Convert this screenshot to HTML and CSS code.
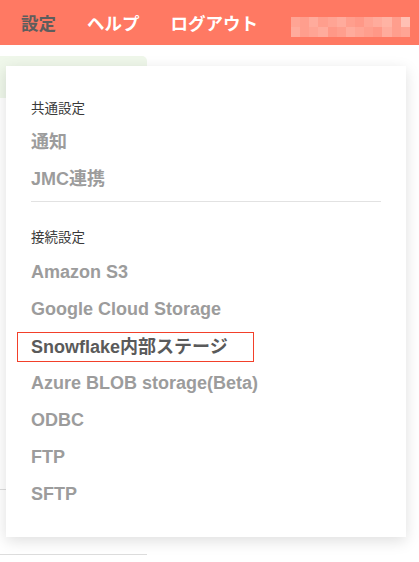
FILE: index.html
```html
<!DOCTYPE html>
<html lang="ja">
<head>
<meta charset="utf-8">
<link rel="stylesheet" href="styles.css">
</head>
<body>
<header class="topbar">
  <nav class="nav">
    <span class="nav-item is-current">設定</span>
    <span class="nav-item">ヘルプ</span>
    <span class="nav-item">ログアウト</span>
    <span class="user-blur">
      <span class="px p1"></span><span class="px p2"></span><span class="px p3"></span><span class="px p2"></span><span class="px p1"></span><span class="px p3"></span><span class="px p2"></span><span class="px p4"></span><span class="px p1"></span><span class="px p3"></span><span class="px p5"></span><span class="px p2"></span><span class="px p6"></span>
      <span class="px p3"></span><span class="px p2"></span><span class="px p1"></span><span class="px p3"></span><span class="px p4"></span><span class="px p2"></span><span class="px p3"></span><span class="px p1"></span><span class="px p2"></span><span class="px p4"></span><span class="px p3"></span><span class="px p2"></span><span class="px p1"></span>
    </span>
  </nav>
</header>
<main class="page">
  <aside class="sidebar">
    <div class="side-active"></div>
    <div class="side-rule rule-a"></div>
    <div class="side-rule rule-b"></div>
  </aside>
</main>
<div class="dropdown">
  <div class="group-title">共通設定</div>
  <div class="item">通知</div>
  <div class="item">JMC連携</div>
  <hr class="divider">
  <div class="group-title second">接続設定</div>
  <div class="item">Amazon S3</div>
  <div class="item">Google Cloud Storage</div>
  <div class="item"><span class="highlight">Snowflake内部ステージ</span></div>
  <div class="item">Azure BLOB storage(Beta)</div>
  <div class="item">ODBC</div>
  <div class="item">FTP</div>
  <div class="item">SFTP</div>
</div>
</body>
</html>
```
FILE: styles.css
```css
* { box-sizing: border-box; }
html, body {
  margin: 0;
  padding: 0;
  background: #ffffff;
  font-family: "Liberation Sans", "Noto Sans CJK JP", sans-serif;
  width: 419px;
  height: 562px;
  overflow: hidden;
}
.topbar {
  height: 45px;
  background: #ff7963;
}
.nav {
  display: flex;
  align-items: center;
  height: 45px;
  padding-left: 21px;
  gap: 31px;
}
.nav-item {
  font-size: 17.5px;
  font-weight: bold;
  color: #ffffff;
  line-height: 20px;
  padding-top: 2px;
}
.nav-item.is-current { color: #5d5d5d; }
.user-blur {
  display: grid;
  grid-template-columns: repeat(13, 9.15px);
  grid-template-rows: 10px 10px;
  width: 119px;
  height: 20px;
  margin-left: 2px;
  margin-top: 9px;
}
.px { display: block; }
.p1 { background: #ffa494; }
.p2 { background: #ff9e8d; }
.p3 { background: #ffab9c; }
.p4 { background: #ff9887; }
.p5 { background: #ffb3a4; }
.p6 { background: #ffc0b4; }

.page { display: flex; }
.sidebar {
  width: 147px;
  display: flex;
  flex-direction: column;
}
.side-active {
  margin-top: 11px;
  height: 42px;
  background: #eff7ea;
  border-top-right-radius: 5px;
}
.side-rule {
  height: 1px;
  background: #dddddd;
}
.rule-a { margin-top: 391px; width: 10px; }
.rule-b { margin-top: 64px; }

.dropdown {
  position: absolute;
  left: 6px;
  top: 66px;
  width: 400px;
  height: 471px;
  background: #ffffff;
  box-shadow: 0 4px 14px rgba(0, 0, 0, 0.13);
  padding: 33px 25px 0 25px;
}
.group-title {
  font-size: 13.5px;
  line-height: 20px;
  color: #3a3a3a;
  margin-bottom: 4px;
}
.group-title.second { margin-top: 26px; margin-bottom: 5px; }
.item {
  font-size: 18px;
  font-weight: bold;
  color: #9c9c9c;
  line-height: 37px;
  height: 37px;
  white-space: nowrap;
  padding-top: 1px;
}
.highlight {
  display: inline-block;
  color: #5a5a5a;
  border: 1px solid #f2402a;
  margin-left: -14px;
  padding: 0 25px 0 13px;
  line-height: 28px;
  height: 30px;
  vertical-align: top;
  margin-top: 4px;
}
.divider {
  margin: 4px 0 0 0;
  border: 0;
  height: 1px;
  background: #e2e2e2;
}
```
